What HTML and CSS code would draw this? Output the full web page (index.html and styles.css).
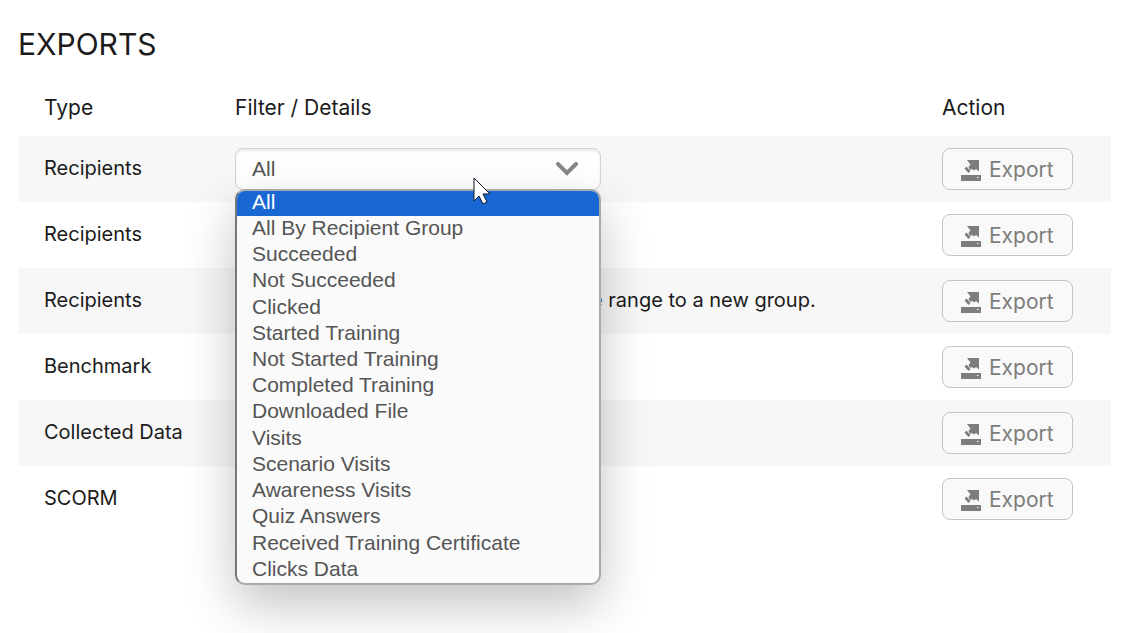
FILE: index.html
```
<!DOCTYPE html>
<html lang="en">
<head>
  <meta charset="UTF-8">
  <meta name="viewport" content="width=device-width, initial-scale=1.0">
  <title>Exports</title>
  <link rel="stylesheet" href="styles.css">
</head>
<body>
  <svg class="sprite" width="0" height="0" aria-hidden="true">
    <symbol id="icon-export" viewBox="0 0 20 21">
      <path d="M0 15h20v6H0zM6 0h12v11.500l-3-2.500-2 1.500-2-1.500-2 1-1.500-3 2-2.500zM3.500 8.500l2-2 4 4.500-2 2z" />
      <path class="led" d="M16 17h1.500v1H16z" />
    </symbol>
    <symbol id="icon-chevron" viewBox="0 0 22 14">
      <path d="M2 2l9 9 9-9" />
    </symbol>
  </svg>

  <main class="container">
    <h1>EXPORTS</h1>

    <table class="exports">
      <thead>
        <tr>
          <th class="col-type">Type</th>
          <th>Filter / Details</th>
          <th class="col-action">Action</th>
        </tr>
      </thead>
      <tbody>
        <tr>
          <td>Recipients</td>
          <td>
            <div class="select-box">
              <select id="recipient-filter" aria-label="Recipient filter">
                <option>All</option>
              </select>
              <svg class="chevron"><use href="#icon-chevron" /></svg>
              <ul class="options" role="listbox" aria-label="Recipient filter">
                <li class="active" role="option" aria-selected="true">All</li>
                <li role="option">All By Recipient Group</li>
                <li role="option">Succeeded</li>
                <li role="option">Not Succeeded</li>
                <li role="option">Clicked</li>
                <li role="option">Started Training</li>
                <li role="option">Not Started Training</li>
                <li role="option">Completed Training</li>
                <li role="option">Downloaded File</li>
                <li role="option">Visits</li>
                <li role="option">Scenario Visits</li>
                <li role="option">Awareness Visits</li>
                <li role="option">Quiz Answers</li>
                <li role="option">Received Training Certificate</li>
                <li role="option">Clicks Data</li>
              </ul>
              <svg class="pointer" viewBox="0 0 18 28">
                <path d="M1 1v23l5-5 4 8 4-2-4-8h7z" />
              </svg>
            </div>
          </td>
          <td><button type="button"><svg><use href="#icon-export" /></svg>Export</button></td>
        </tr>
        <tr>
          <td>Recipients</td>
          <td>
            <div class="select-box">
              <select aria-label="Recipient group"></select>
            </div>
          </td>
          <td><button type="button"><svg><use href="#icon-export" /></svg>Export</button></td>
        </tr>
        <tr>
          <td>Recipients</td>
          <td>Export the recipients in a selected date range to a new group.</td>
          <td><button type="button"><svg><use href="#icon-export" /></svg>Export</button></td>
        </tr>
        <tr>
          <td>Benchmark</td>
          <td></td>
          <td><button type="button"><svg><use href="#icon-export" /></svg>Export</button></td>
        </tr>
        <tr>
          <td>Collected Data</td>
          <td></td>
          <td><button type="button"><svg><use href="#icon-export" /></svg>Export</button></td>
        </tr>
        <tr>
          <td>SCORM</td>
          <td>
            <div class="select-box">
              <select aria-label="SCORM version"></select>
            </div>
          </td>
          <td><button type="button"><svg><use href="#icon-export" /></svg>Export</button></td>
        </tr>
      </tbody>
    </table>
  </main>
</body>
</html>
```
FILE: styles.css
```
* {
  box-sizing: border-box;
}
body {
  min-height: 100vh;
  font-family: Inter, "Open Sans", sans-serif;
  font-size: 20px;
  line-height: 28px;
  margin: 0;
  background: #fff;
  color: #1b1b1b;
}
.sprite {
  position: absolute;
}
.container {
  padding: 24px 26px 0 18px;
}
h1 {
  margin: 0;
  font-size: 30px;
  font-weight: 400;
  line-height: 40px;
}
.exports {
  width: 100%;
  margin-top: 16px;
  border-collapse: collapse;
  table-layout: fixed;
}
th {
  height: 56px;
  padding: 0;
  text-align: left;
  font-size: 21px;
  font-weight: 400;
}
td {
  height: 66px;
  padding: 0 0 2px;
}
th:first-child, td:first-child {
  padding-left: 26px;
}
td:last-child {
  padding: 0;
}
.col-type {
  width: 217px;
}
.col-action {
  width: 169px;
}
tbody tr:nth-child(odd) {
  background: #f7f7f7;
}
.select-box {
  position: relative;
  max-width: 366px;
  margin-top: 2px;
}
select {
  display: block;
  width: 100%;
  height: 42px;
  padding: 0 16px 2px;
  appearance: none;
  border: 1px solid #d2d2d2;
  border-radius: 8px;
  background: #fff;
  box-shadow: inset 0 2px 3px rgba(0, 0, 0, 0.08);
  font-family: "Liberation Sans", Arial, sans-serif;
  font-size: 21px;
  color: #555;
}
.chevron {
  position: absolute;
  top: 14px;
  right: 23px;
  width: 22px;
  height: 14px;
  fill: none;
  stroke: #888;
  stroke-width: 4;
  stroke-linecap: round;
}
.options {
  position: absolute;
  z-index: 1;
  top: 41px;
  left: 0;
  width: 100%;
  height: 396px;
  margin: 0;
  padding: 0;
  display: grid;
  grid-template-rows: 25px;
  grid-auto-rows: 1fr;
  overflow: hidden;
  list-style: none;
  border: 2px solid #a9aaa9;
  border-left-color: #777;
  border-radius: 10px;
  background: #fafafa;
  box-shadow: 0 20px 50px rgba(0, 0, 0, 0.24);
  font-family: "Liberation Sans", Arial, sans-serif;
  font-size: 21px;
  line-height: 24px;
  color: #555;
}
.options li {
  padding-left: 15px;
}
.options .active {
  background: #1967d2;
  line-height: 22px;
  color: #fff;
}
.pointer {
  position: absolute;
  z-index: 2;
  top: 29px;
  left: 238px;
  width: 18px;
  height: 28px;
  fill: #fff;
  stroke: #101828;
}
button {
  display: flex;
  align-items: center;
  gap: 8px;
  width: 131px;
  height: 42px;
  padding: 2px 18px 0;
  border: 1px solid #c4c4c4;
  border-radius: 8px;
  background: #f9f9f9;
  font: inherit;
  font-size: 21px;
  color: #7d7d7d;
}
button svg {
  flex: none;
  width: 20px;
  height: 21px;
  fill: #7d7d7d;
}
.led {
  fill: #fff;
}
```
